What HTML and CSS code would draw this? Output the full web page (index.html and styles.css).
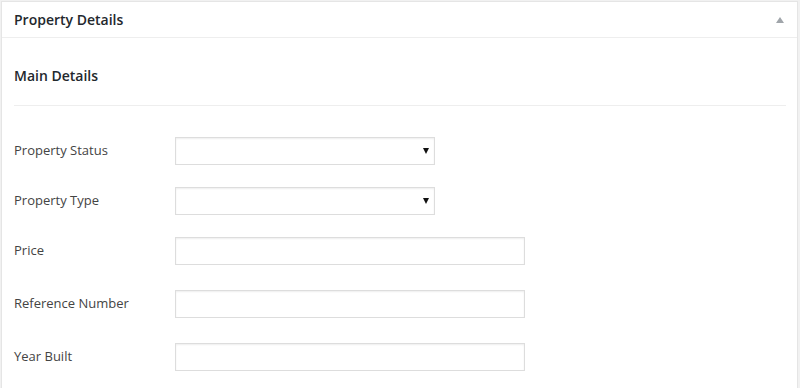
FILE: index.html
```html
<!DOCTYPE html>
<html lang="en">
<head>
    <meta charset="UTF-8">
    <meta name="viewport" content="width=device-width, initial-scale=1.0">
    <title>Property Details</title>
    <link rel="stylesheet" href="styles.css">
</head>
<body>
    <div class="postbox">
        <div class="postbox-header">
            <h2>Property Details</h2>
            <span class="toggle-arrow"></span>
        </div>
        <div class="inside">
            <h4 class="section-title">Main Details</h4>
            <div class="separator"></div>

            <div class="field-row select-row">
                <label>Property Status</label>
                <div class="select-wrap">
                    <select></select>
                    <span class="select-arrow"></span>
                </div>
            </div>
            <div class="field-row select-row">
                <label>Property Type</label>
                <div class="select-wrap">
                    <select></select>
                    <span class="select-arrow"></span>
                </div>
            </div>
            <div class="field-row">
                <label>Price</label>
                <input type="text">
            </div>
            <div class="field-row">
                <label>Reference Number</label>
                <input type="text">
            </div>
            <div class="field-row">
                <label>Year Built</label>
                <input type="text">
            </div>
        </div>
    </div>
</body>
</html>
```

FILE: styles.css
```css
body {
    margin: 0;
    padding: 0;
    background-color: #f1f1f1;
    font-family: "Open Sans", sans-serif;
    color: #444;
}
.postbox {
    margin: 1px 2px 0 1px;
    background-color: #fff;
    border: 1px solid #e5e5e5;
    border-bottom: none;
    height: 387px;
    box-sizing: border-box;
}
.postbox-header {
    display: flex;
    justify-content: space-between;
    align-items: center;
    padding: 8px 12px;
    border-bottom: 1px solid #eee;
}
.postbox-header h2 {
    margin: 0;
    font-size: 14px;
    line-height: 19px;
    font-weight: 600;
    color: #23282d;
}
.toggle-arrow {
    width: 0;
    height: 0;
    border-left: 4px solid transparent;
    border-right: 4px solid transparent;
    border-bottom: 6px solid #a0a5aa;
    margin-right: 1px;
}
.inside {
    padding: 0 11px 0 12px;
}
.section-title {
    margin: 28px 0 0;
    font-size: 14px;
    line-height: 20px;
    font-weight: 600;
    color: #23282d;
}
.separator {
    margin-top: 19px;
    border-top: 1px solid #eee;
    margin-bottom: 31px;
}
.field-row {
    display: flex;
    align-items: center;
    margin-bottom: 25px;
}
.select-row {
    margin-bottom: 22px;
}
.field-row label {
    width: 161px;
    font-size: 13px;
    line-height: 18px;
    padding-bottom: 2px;
}
.select-wrap {
    position: relative;
    width: 260px;
    height: 28px;
}
select,
input {
    box-sizing: border-box;
    height: 28px;
    margin: 0;
    border: 1px solid #ddd;
    box-shadow: inset 0 1px 2px rgba(0, 0, 0, 0.07);
    background-color: #fff;
    font-family: "Open Sans", sans-serif;
    font-size: 13px;
    border-radius: 0;
    outline: none;
}
select {
    width: 260px;
    appearance: none;
    -webkit-appearance: none;
}
input {
    width: 350px;
}
.select-arrow {
    position: absolute;
    right: 6px;
    top: 11px;
    width: 0;
    height: 0;
    border-left: 3px solid transparent;
    border-right: 3px solid transparent;
    border-top: 6px solid #111;
}
```
